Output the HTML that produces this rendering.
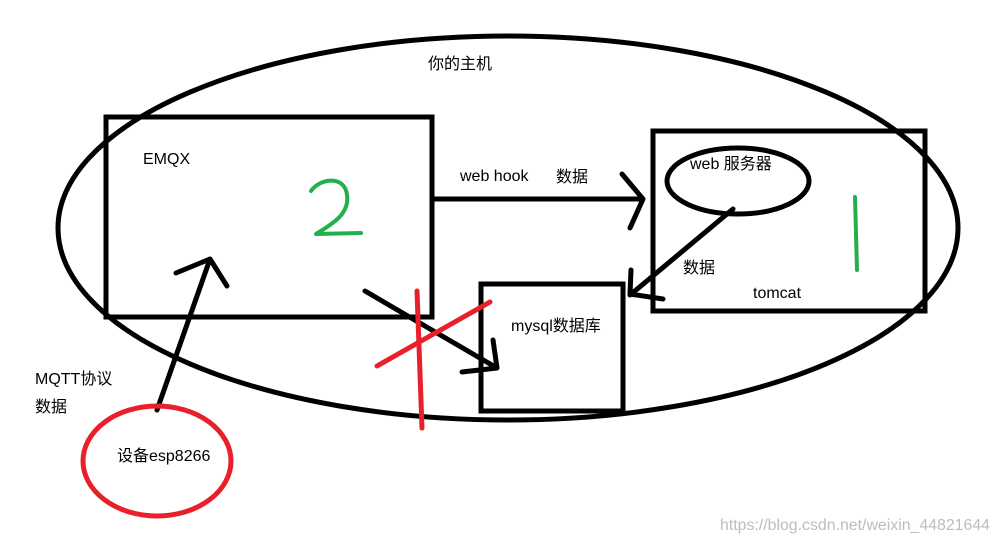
<!DOCTYPE html>
<html><head><meta charset="utf-8"><style>
html,body{margin:0;padding:0;background:#fff;width:999px;height:541px;overflow:hidden}
text{font-family:"Liberation Sans","Noto Sans CJK SC",sans-serif;font-size:16px;fill:#000}
</style></head><body>
<svg width="999" height="541" viewBox="0 0 999 541" xmlns="http://www.w3.org/2000/svg">
<g fill="none" stroke="#000" stroke-width="5" stroke-linecap="round" stroke-linejoin="round">
<ellipse cx="508" cy="228" rx="450" ry="192"/>
<rect x="106" y="117" width="326" height="200" stroke-linecap="butt" stroke-linejoin="miter"/>
<rect x="653" y="131" width="272" height="180" stroke-linecap="butt" stroke-linejoin="miter"/>
<rect x="481" y="284" width="142" height="127" stroke-linecap="butt" stroke-linejoin="miter"/>
<ellipse cx="738" cy="181" rx="71" ry="33"/>
<path d="M434 199 L643 199 M622 174 L643 199 L630 228"/>
<path d="M733 209 L630 295 M631 270 L630 294 L663 299"/>
<path d="M365 291 L497 368 M493 340 L497 368 L462 372"/>
<path d="M157 410 L210 259 M176 273 L210 259 L227 286"/>
</g>
<g fill="none" stroke="#e8202a" stroke-width="5" stroke-linecap="round">
<path d="M417 291 L422 428"/>
<path d="M377 366 L490 302"/>
<ellipse cx="157" cy="461" rx="74" ry="55"/>
</g>
<path d="M311 191 C320 178 345 175 347 195 C350 215 330 225 316 234 L361 233" fill="none" stroke="#22b04c" stroke-width="4" stroke-linecap="round" stroke-linejoin="round"/>
<path d="M855 197 L857 270" fill="none" stroke="#22b04c" stroke-width="4" stroke-linecap="round"/>
<text x="428" y="69">你的主机</text>
<text x="143" y="164">EMQX</text>
<text x="460" y="181">web hook</text>
<text x="556" y="182">数据</text>
<text x="690" y="169">web 服务器</text>
<text x="683" y="273">数据</text>
<text x="753" y="298">tomcat</text>
<text x="511" y="331">mysql数据库</text>
<text x="35" y="384">MQTT协议</text>
<text x="35" y="412">数据</text>
<text x="117" y="461">设备esp8266</text>
<text x="720" y="530" style="font-size:15.5px;fill:#bdbdbd" textLength="270" lengthAdjust="spacingAndGlyphs">https://blog.csdn.net/weixin_44821644</text>
</svg>
</body></html>
